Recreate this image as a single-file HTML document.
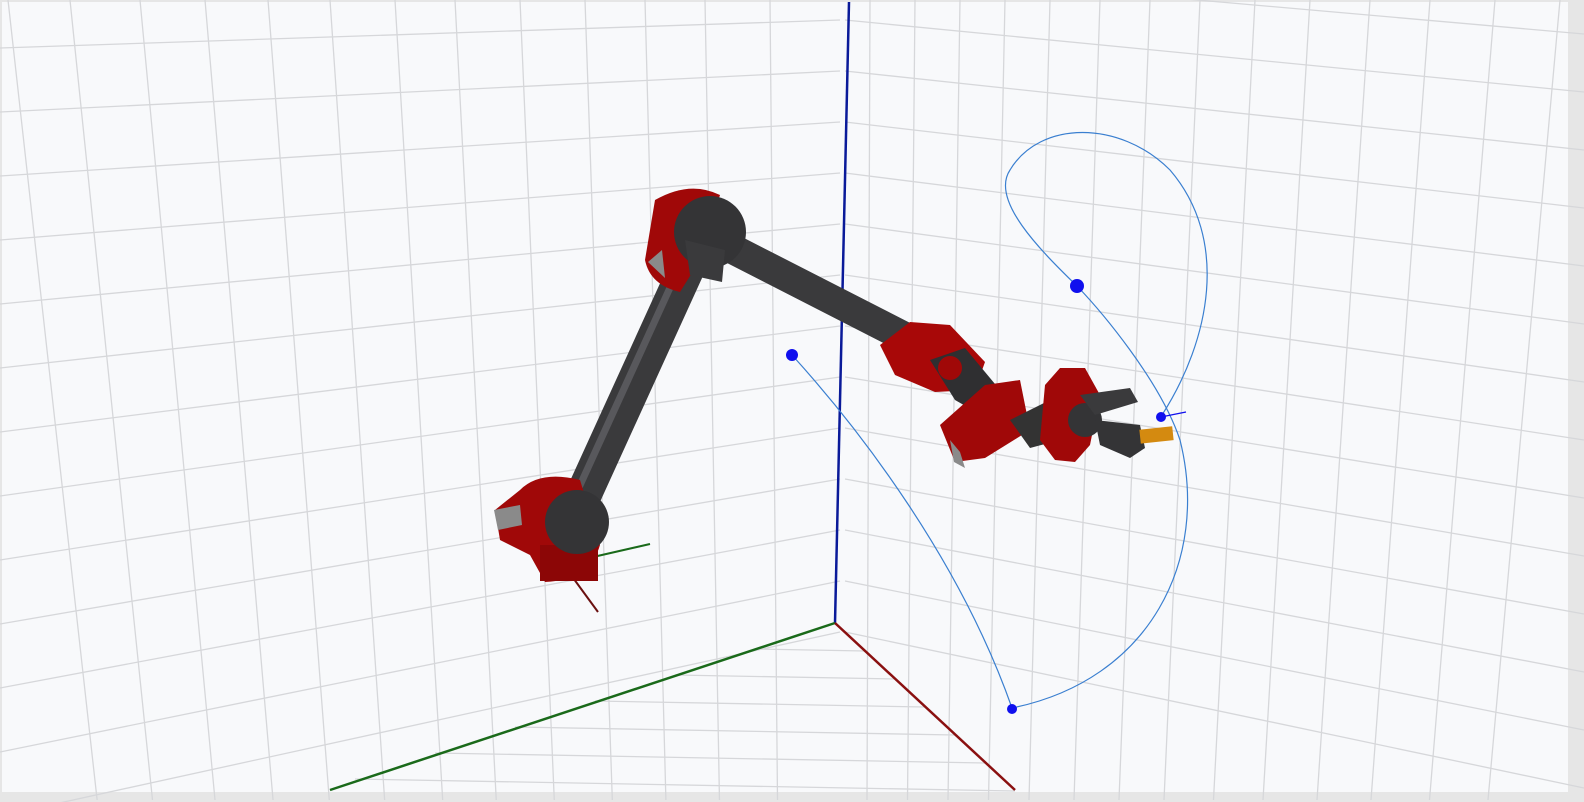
<!DOCTYPE html>
<html><head><meta charset="utf-8"><style>
html,body{margin:0;padding:0;background:#e6e6e6;}
svg{display:block;}
</style></head><body>
<svg id="s" width="1584" height="802" viewBox="0 0 1584 802" xmlns="http://www.w3.org/2000/svg">
<rect x="2" y="2" width="1566" height="790" fill="#f8f9fb"/>
<g id="grid" stroke="#d6d7da" stroke-width="1.3" fill="none"></g>
<line x1="835" y1="623" x2="849" y2="2" stroke="#0a1a99" stroke-width="2.5"/>
<line x1="835" y1="623" x2="330" y2="790" stroke="#1a6a1a" stroke-width="2.5"/>
<line x1="835" y1="623" x2="1015" y2="790" stroke="#8a1010" stroke-width="2.5"/>
<g fill="none" stroke="#3a7fd0" stroke-width="1.2">
<path d="M792 355 C 860 430, 960 560, 1012 708"/>
<path d="M1012 708 C 1150 680, 1210 560, 1180 440 C 1160 380, 1100 310, 1077 286 C 1040 250, 990 200, 1010 170 C 1040 120, 1120 120, 1170 170 C 1230 240, 1210 340, 1162 415"/>
</g>
<circle cx="792" cy="355" r="6" fill="#1010ee"/>
<circle cx="1077" cy="286" r="7" fill="#1010ee"/>
<circle cx="1012" cy="709" r="5" fill="#1010ee"/>
<circle cx="1161" cy="417" r="5" fill="#1010ee"/>
<line x1="1161" y1="417" x2="1186" y2="412" stroke="#1010ee" stroke-width="1.2"/>
<line x1="580" y1="560" x2="650" y2="544" stroke="#1a6a1a" stroke-width="2"/>
<line x1="560" y1="560" x2="598" y2="612" stroke="#6a1010" stroke-width="2"/>
<line x1="572" y1="520" x2="695" y2="250" stroke="#3a3a3c" stroke-width="36" stroke-linecap="round"/>
<line x1="566" y1="516" x2="689" y2="246" stroke="#58585c" stroke-width="7" stroke-linecap="round"/>
<line x1="715" y1="240" x2="930" y2="350" stroke="#3a3a3c" stroke-width="30" stroke-linecap="round"/>
<path d="M520 490 Q540 470 580 480 L600 545 Q590 580 545 582 L530 555 L500 540 L495 510 Z" fill="#a00808"/>
<rect x="540" y="545" width="58" height="36" fill="#8c0606"/>
<path d="M494 510 L520 505 L522 525 L498 530 Z" fill="#8a8a8a"/>
<circle cx="577" cy="522" r="32" fill="#343436"/>
<path d="M655 200 Q690 180 720 195 L700 260 L680 292 Q650 285 645 260 Z" fill="#a00808"/>
<path d="M648 262 L662 250 L665 278 Z" fill="#8a8a8a"/>
<circle cx="710" cy="232" r="36" fill="#343436"/>
<path d="M685 240 L725 250 L722 282 L690 275 Z" fill="#3a3a3c"/>
<path d="M880 345 L910 322 L950 325 L985 362 L975 390 L935 392 L895 375 Z" fill="#a80808"/>
<path d="M930 360 L965 348 L1000 390 L990 420 L955 400 Z" fill="#2f2f31"/>
<circle cx="950" cy="368" r="12" fill="#a00808"/>
<path d="M940 425 L985 385 L1020 380 L1030 430 L985 458 L955 462 Z" fill="#a00808"/>
<path d="M950 440 L960 452 L965 468 L954 462 Z" fill="#8a8a8a"/>
<circle cx="987" cy="402" r="9" fill="#a00808"/>
<path d="M1010 420 L1050 400 L1060 440 L1030 448 Z" fill="#333"/>
<path d="M1045 385 L1060 368 L1085 368 L1100 395 L1090 445 L1075 462 L1055 460 L1040 440 Z" fill="#a00808"/>
<circle cx="1085" cy="420" r="17" fill="#343436"/>
<path d="M1080 395 L1130 388 L1138 402 L1095 415 Z" fill="#3a3a3c"/>
<path d="M1095 420 L1140 425 L1145 448 L1130 458 L1100 445 Z" fill="#343436"/>
<rect x="1140" y="428" width="33" height="14" fill="#d48a10" transform="rotate(-6 1156 435)"/>
</svg>
<script>
(function(){
var g=document.getElementById('grid'),ns='http://www.w3.org/2000/svg';
function L(a,b,c,d){var l=document.createElementNS(ns,'line');l.setAttribute('x1',a);l.setAttribute('y1',b);l.setAttribute('x2',c);l.setAttribute('y2',d);g.appendChild(l);}
var lt=[8,70,140,205,268,330,395,455,520,585,645,705,770];
lt.forEach(function(t){L(t,0,t+90*(1-t/840),800);});
for(var i=-1;i<13;i++){L(0,48+64*i,840,20+51*i);}
var rt=[870,915,960,1005,1050,1100,1150,1200,1255,1310,1370,1430,1495,1560];
rt.forEach(function(t){L(t,0,t-70*(t-840)/700,800);});
for(var j=-1;j<13;j++){L(845,20+51*j,1584,92+58*j);}
for(var k=1;k<7;k++){L(835-80*k,623+26*k,835+30*k,623+28*k);}
})();
</script>
</body></html>
